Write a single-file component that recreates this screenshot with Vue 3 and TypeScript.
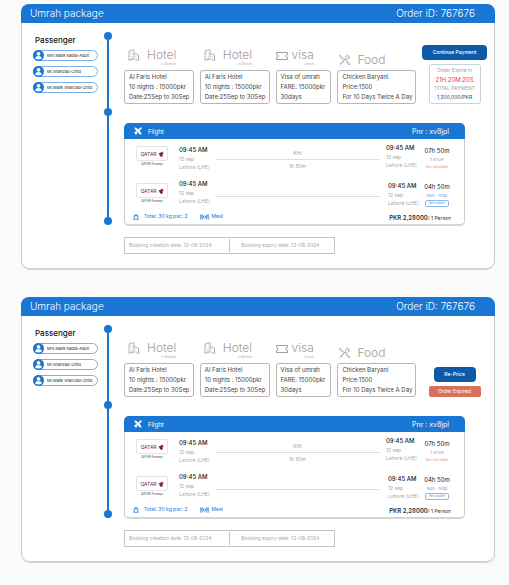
<script setup lang="ts">
type IconName = 'hotel' | 'visa' | 'food'

interface Service {
  icon: IconName
  title: string
  note?: string
  lines: string[]
}

interface Leg {
  id: string
  via?: string
  viaTime?: string
  duration: string
  stops: string
  fare: string
  direct: boolean
}

interface Order {
  key: string
  expired: boolean
}

const orders: Order[] = [
  { key: 'open', expired: false },
  { key: 'expired', expired: true },
]

const passengers: string[] = ['Mrs.Malik Nadia-Adult', 'Mr.Shahzad-Child', 'Mr.Malik Shahzad-Child']

const icons: Record<IconName, string> = {
  hotel:
    'M2 22V4l10-3v21M12 9l9 3v10M1 22h6v-3h2v3M15 22h8M5 7h1M8.500 7h1M5 11h1M8.500 11h1M5 15h1M8.500 15h1M16 15v1M16 19v1',
  visa: 'M1 5h22v4a3 3 0 0 0 0 6v4H1v-4a3 3 0 0 0 0-6z',
  food:
    'M2 2l9 10M2 2c-1 4 1 7 5 8M13 14l7 8 2-2-8-7M22 6l-4 4c-2 2-4 1-5 0L3 21l-1-1L13 9c-1-2 0-4 2-5l3-3M21 4l-4 4M19 2l-4 4',
}

const services: Service[] = [
  {
    icon: 'hotel',
    title: 'Hotel',
    note: 'in Madinah',
    lines: ['Al Faris Hotel', '10 nights : 15000pkr', 'Date:25Sep to 30Sep'],
  },
  {
    icon: 'hotel',
    title: 'Hotel',
    note: 'in Makkah',
    lines: ['Al Faris Hotel', '10 nights : 15000pkr', 'Date:25Sep to 30Sep'],
  },
  {
    icon: 'visa',
    title: 'visa',
    note: 'Umrah',
    lines: ['Visa of umrah', 'FARE: 15000pkr', '30days'],
  },
  {
    icon: 'food',
    title: 'Food',
    lines: ['Chicken Baryani', 'Price:1500', 'For 10 Days Twice A Day'],
  },
]

const legs: Leg[] = [
  {
    id: 'a',
    via: 'KHI',
    viaTime: '1h 50m',
    duration: '07h 50m',
    stops: '1 STOP',
    fare: 'Non-refundable',
    direct: false,
  },
  { id: 'b', duration: '04h 50m', stops: 'Non - Stop', fare: 'Refundable', direct: true },
]
</script>

<template>
  <main class="page">
    <article v-for="order in orders" :key="order.key" class="package">
      <header class="package-head">
        <h1>Umrah package</h1>
        <span>Order iD: 767676</span>
      </header>

      <div class="package-body">
        <aside class="passengers">
          <h2>Passenger</h2>
          <ul>
            <li v-for="name in passengers" :key="name">
              <svg viewBox="0 0 20 20" aria-hidden="true">
                <circle cx="10" cy="10" r="10" fill="#1976d2" />
                <circle cx="10" cy="7" r="3.500" fill="#fff" />
                <path d="M4 15.500c0-6 12-6 12 0-3 2.500-9 2.500-12 0z" fill="#fff" />
              </svg>
              <span>{{ name }}</span>
            </li>
          </ul>
        </aside>

        <div class="timeline" aria-hidden="true">
          <i class="dot"></i>
          <i class="line"></i>
          <i class="dot"></i>
          <i class="line line-long"></i>
          <i class="dot"></i>
        </div>

        <div class="details">
          <div class="services">
            <section v-for="(s, i) in services" :key="i" class="service" :class="s.icon">
              <div class="service-head">
                <svg viewBox="0 0 24 24" aria-hidden="true">
                  <path :d="icons[s.icon]" />
                </svg>
                <h3>
                  {{ s.title }}
                  <small v-if="s.note">{{ s.note }}</small>
                </h3>
              </div>
              <div class="service-box">
                <p v-for="line in s.lines" :key="line">{{ line }}</p>
              </div>
            </section>

            <div v-if="order.expired" class="actions">
              <button type="button" class="btn btn-small">Re-Price</button>
              <div class="expired">Order Expired</div>
            </div>
            <div v-else class="actions">
              <button type="button" class="btn">Continue Payment</button>
              <div class="expiry">
                <span>Order Expire in</span>
                <strong>21H:20M:20S</strong>
                <span>TOTAL PAYMENT</span>
                <b>1,200,000/PKR</b>
              </div>
            </div>
          </div>

          <section class="flight">
            <header class="flight-head">
              <svg viewBox="0 0 20 20" aria-hidden="true">
                <path
                  d="M1 5l4-3 6 4 4-4c2-1 4 0 3 3l-4 4 4 6-3 4-6-6-2 2v3l-3 2-1-4-3-2 2-2h3l2-2z"
                />
                <path d="M1 1h4L1 4zM15 1h4v4zM15 19h4v-4z" />
              </svg>
              <h3>Flight</h3>
              <span>Pnr : xv8jpl</span>
            </header>

            <div v-for="leg in legs" :key="leg.id" class="leg" :class="{ direct: leg.direct }">
              <div class="airline">
                <div class="logo">
                  <span>QATAR</span>
                  <svg viewBox="0 0 16 16" aria-hidden="true">
                    <path d="M1 5c4 1 5 0 7-2l7-2-3 3 3 1-3 4 1 5-4 1-4-1-1-5-3-1 3-1z" />
                  </svg>
                </div>
                <p>QATAR Airways</p>
              </div>
              <div class="stop depart">
                <b>09:45 AM</b>
                <span>12 sep</span>
                <span>Lahore (LHE)</span>
              </div>
              <div class="route">
                <span>{{ leg.via }}</span>
                <span>{{ leg.viaTime }}</span>
              </div>
              <div class="stop arrive">
                <b>09:45 AM</b>
                <span>12 sep</span>
                <span>Lahore (LHE)</span>
              </div>
              <div class="duration">
                <b>{{ leg.duration }}</b>
                <span>{{ leg.stops }}</span>
                <small>{{ leg.fare }}</small>
              </div>
            </div>

            <footer class="flight-foot">
              <span class="extra">
                <svg class="bag" viewBox="0 0 16 16" aria-hidden="true">
                  <path d="M1 14h14M3 14V5h10v9M5 5V2h6v3" />
                </svg>
                Total: 30 kg psc: 2
              </span>
              <span class="extra">
                <svg class="meal" viewBox="0 0 24 16" aria-hidden="true">
                  <path d="M2 1v14M6 1v14M18 1v14M22 1v14M2 5h4M18 5h4" />
                  <circle cx="12" cy="8" r="3" />
                </svg>
                Meal
              </span>
              <span class="price"><b>PKR 2,28000</b>/ 1 Person</span>
            </footer>
          </section>

          <div class="booking">
            <span>Booking creation date: 12-08-2024</span>
            <span>Booking expiry date: 12-08-2024</span>
          </div>
        </div>
      </div>
    </article>
  </main>
</template>

<style>
body {
  background: #fafafa;
}
</style>

<style scoped>
.page,
.page * {
  box-sizing: border-box;
}

.page {
  display: flex;
  flex-direction: column;
  gap: 27px;
  padding: 4px 14px 23px 21px;
  font-family: Inter, 'Liberation Sans', sans-serif;
  font-size: 6px;
  line-height: 9px;
  color: #444;
  white-space: nowrap;
}

h1,
h2,
h3,
p,
ul {
  margin: 0;
  padding: 0;
  font-weight: 400;
}

.package {
  background: #fff;
  border: 1px solid #ccc;
  border-top: 0;
  border-bottom: 2px solid #d4d4d4;
  border-radius: 9px;
}

.package-head {
  display: flex;
  justify-content: space-between;
  align-items: center;
  height: 19px;
  margin: 0 -1px;
  padding: 0 20px 0 9px;
  border-radius: 8px 8px 0 0;
  background: #1976d2;
  color: #fff;
  font-size: 10px;
  font-weight: 300;
}

.package-head h1 {
  font-size: 10px;
  font-weight: 300;
}

.package-body {
  display: flex;
}

.passengers {
  flex: 0 0 82px;
  padding: 12px 6px 0 11px;
}

.passengers h2 {
  padding-left: 2px;
  font-size: 8px;
  line-height: 10px;
  font-weight: 500;
  color: #111;
}

.passengers ul {
  display: flex;
  flex-direction: column;
  gap: 5px;
  margin-top: 5px;
  list-style: none;
}

.passengers li {
  display: flex;
  align-items: center;
  gap: 3px;
  height: 11px;
  border: 1px solid #7db1e5;
  border-radius: 6px;
  font-size: 4px;
  color: #222;
}

.passengers li svg {
  flex: none;
  width: 11px;
  height: 11px;
  margin-left: -1px;
}

.timeline {
  flex: 0 0 8px;
  display: flex;
  flex-direction: column;
  align-items: center;
  margin: 9px 12px 43px 0;
}

.dot {
  flex: none;
  width: 8px;
  height: 8px;
  border-radius: 50%;
  background: #1976d2;
}

.line {
  flex: 68 1 0;
  width: 2px;
  background: #1976d2;
}

.line-long {
  flex-grow: 101;
}

.details {
  flex: 1;
  min-width: 0;
  padding: 0 7px 14px 0;
}

.services {
  display: grid;
  grid-template-columns: 70fr 70fr 56fr 79fr 65fr;
  gap: 6px;
  align-items: end;
  min-height: 81px;
}

.service {
  min-width: 0;
}

.service-head {
  display: flex;
  gap: 7px;
  padding-left: 4px;
  color: #a59a9d;
}

.service-head svg {
  flex: none;
  width: 12px;
  height: 12px;
  margin-top: 1px;
  fill: none;
  stroke: currentColor;
  stroke-width: 2;
}

.hotel .service-head svg {
  stroke-width: 1.5;
}

.visa .service-head {
  padding-left: 0;
  gap: 4px;
}

.visa .service-head svg {
  margin-top: 2px;
}

.food .service-head {
  padding-left: 2px;
  gap: 6px;
}

.food .service-head svg {
  stroke-width: 1.5;
}

.service-head h3 {
  font-size: 12px;
  line-height: 14px;
  font-weight: 300;
}

.service-head small {
  display: block;
  font-size: 3px;
  line-height: 5px;
  text-align: right;
}

.service-box {
  margin-top: 3px;
  padding: 1px 4px;
  border: 1px solid #b5b5b5;
  border-radius: 3px;
  line-height: 10px;
}

.actions {
  display: flex;
  flex-direction: column;
  align-items: center;
  gap: 4px;
}

.btn {
  width: 100%;
  height: 15px;
  padding: 0;
  border: 0;
  border-radius: 4px;
  background: #0d5aa7;
  color: #fff;
  font: inherit;
  font-size: 5px;
  font-weight: 500;
}

.btn-small {
  width: 42px;
}

.expired {
  width: 52px;
  border-radius: 2px;
  background: #d9705c;
  color: #fff;
  font-size: 5px;
  line-height: 11px;
  text-align: center;
}

.expiry {
  display: flex;
  flex-direction: column;
  align-items: center;
  width: 52px;
  padding: 1px 0;
  border: 1px solid #c6d4df;
  border-radius: 3px;
  font-size: 5px;
  color: #a5a5a5;
}

.expiry strong {
  font-size: 6px;
  font-weight: 400;
  color: #ef3b3b;
}

.expiry b {
  font-weight: 400;
  color: #23476e;
}

.flight {
  margin: 19px 22px 0 0;
  border: 1px solid #ccc;
  border-top: 0;
  border-bottom: 2px solid #d4d4d4;
  border-radius: 5px;
}

.flight-head {
  display: flex;
  align-items: center;
  gap: 6px;
  height: 16px;
  margin: 0 -1px 4px;
  padding: 0 16px 0 10px;
  border-radius: 5px 5px 0 0;
  background: #1976d2;
  color: #fff;
}

.flight-head svg {
  width: 8px;
  height: 8px;
  fill: #fff;
}

.flight-head h3 {
  flex: 1;
  font-size: 6px;
}

.flight-head span {
  font-size: 7px;
}

.leg {
  display: grid;
  grid-template-columns: 32px 37px 1fr 36px 30px;
  height: 36px;
  padding: 0 12px 0 11px;
}

.leg.direct {
  height: 34px;
}

.airline {
  padding-top: 3px;
  text-align: center;
  font-size: 3px;
  line-height: 6px;
}

.direct .airline {
  padding-top: 4px;
}

.logo {
  display: flex;
  align-items: center;
  justify-content: center;
  gap: 1px;
  height: 15px;
  border: 1px solid #e3e3e3;
  border-radius: 2px;
  font-size: 5px;
  color: #7d1f50;
}

.logo svg {
  width: 6px;
  height: 6px;
  fill: currentColor;
}

.stop,
.duration {
  display: flex;
  flex-direction: column;
}

.stop {
  font-size: 5px;
  line-height: 8px;
  color: #a9a9a9;
}

.stop b {
  font-size: 6px;
  line-height: 10px;
  font-weight: 500;
  color: #222;
}

.depart {
  margin-left: 11px;
  padding-top: 2px;
}

.direct .depart {
  padding-top: 0;
}

.direct .arrive {
  padding: 2px 0 0 2px;
}

.route {
  display: flex;
  flex-direction: column;
  align-items: center;
  margin: 4px 7px 0 11px;
  font-size: 5px;
  line-height: 12px;
  color: #a0a0a0;
}

.route span {
  width: 100%;
  min-height: 12px;
  text-align: center;
}

.route span:first-child {
  border-bottom: 1px solid #ddd;
}

.direct .route {
  margin-top: 6px;
}

.duration {
  align-items: center;
  padding-top: 3px;
  font-size: 4px;
  line-height: 8px;
  color: #5f9bd8;
}

.duration b {
  font-size: 6px;
  line-height: 10px;
  font-weight: 400;
  color: #222;
}

.duration small {
  font-size: 3px;
  line-height: 6px;
  color: #ee8d80;
}

.direct .duration small {
  padding: 0 3px;
  border: 1px solid #8bbbea;
  border-radius: 2px;
  line-height: 5px;
  color: #5f9bd8;
}

.flight-foot {
  display: flex;
  gap: 12px;
  height: 11px;
  padding: 0 13px 0 8px;
  font-size: 5px;
  color: #1976d2;
}

.extra {
  display: flex;
  align-items: center;
  gap: 5px;
  height: 7px;
}

.extra svg {
  height: 6px;
  fill: none;
  stroke: currentColor;
  stroke-width: 2;
}

.extra + .extra {
  gap: 3px;
}

.bag {
  width: 6px;
}

.meal {
  width: 9px;
}

.price {
  margin-left: auto;
  color: #333;
}

.price b {
  font-size: 6px;
  font-weight: 600;
}

.booking {
  display: grid;
  grid-template-columns: 1fr 1fr;
  width: 58%;
  height: 17px;
  margin-top: 11px;
  padding: 1px 0;
  border: 1px solid #c4c4c4;
  font-size: 5px;
  line-height: 13px;
  color: #aaa;
}

.booking span {
  padding-left: 4px;
}

.booking span + span {
  padding-left: 11px;
  border-left: 1px solid #c4c4c4;
}
</style>
